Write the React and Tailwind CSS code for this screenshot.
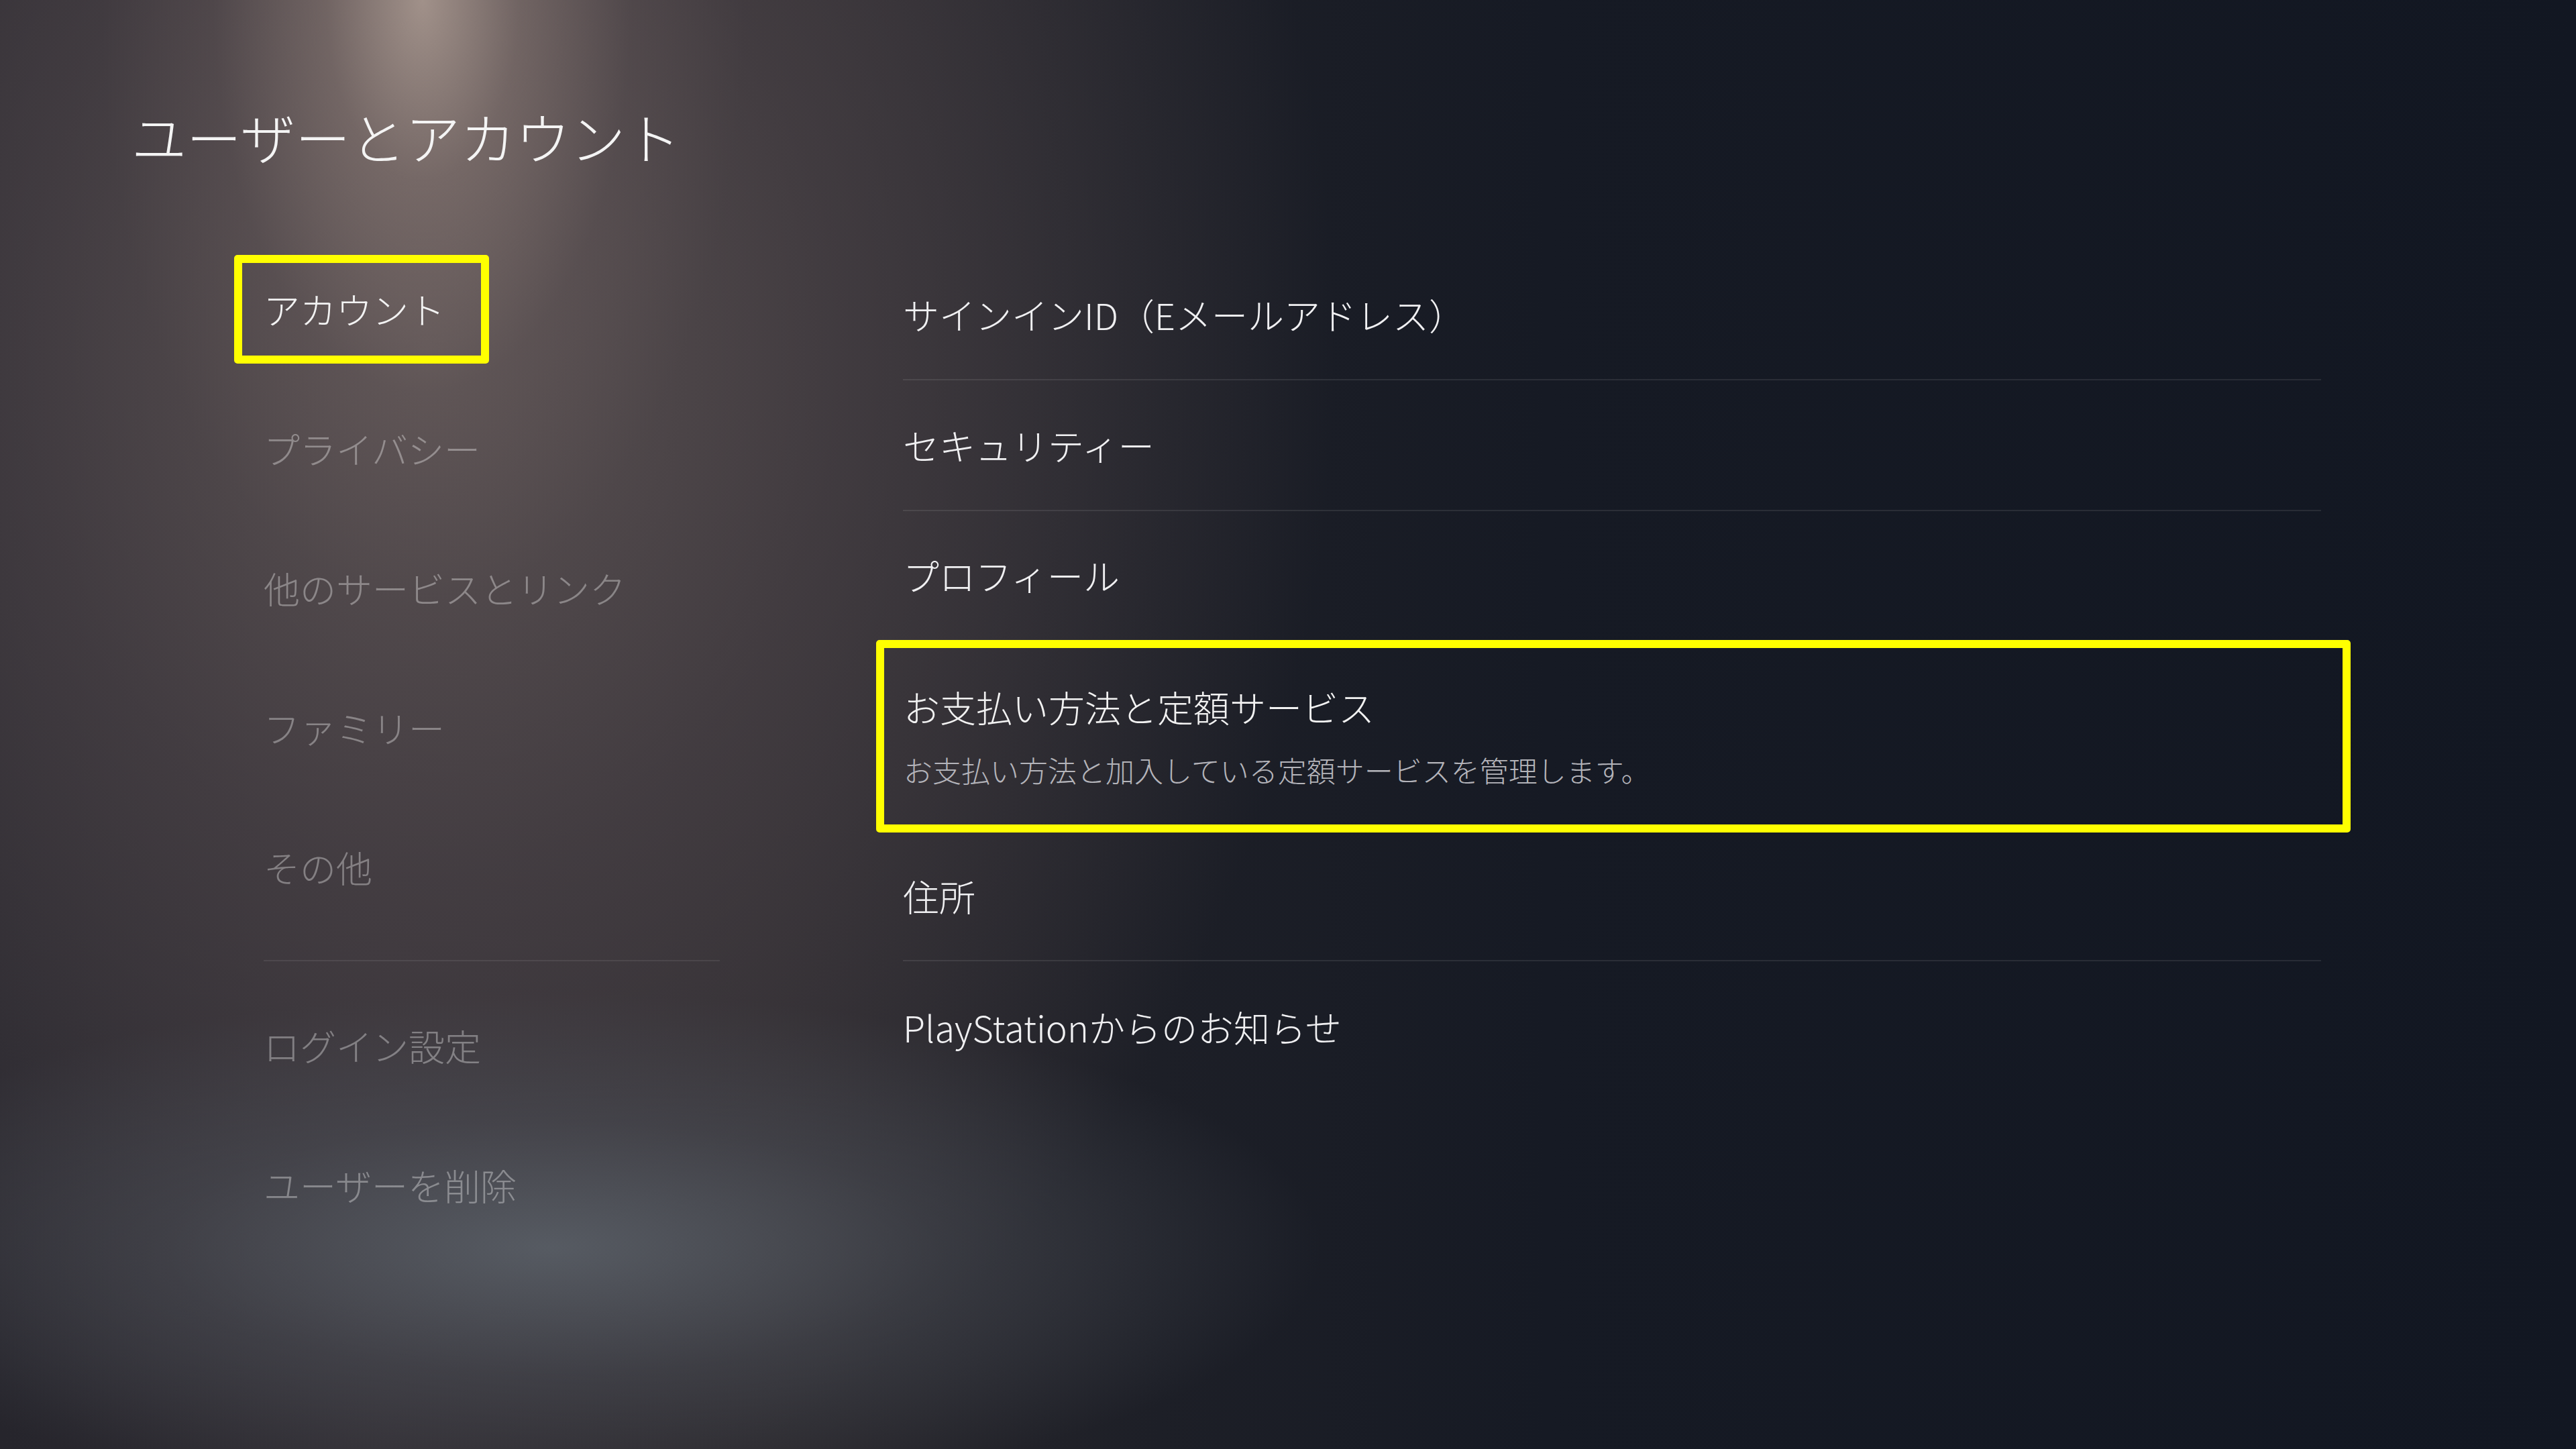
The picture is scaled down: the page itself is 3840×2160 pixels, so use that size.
import React from "react";

const navTop = ["アカウント", "プライバシー", "他のサービスとリンク", "ファミリー", "その他"];
const navBottom = ["ログイン設定", "ユーザーを削除"];

function NavItem({ label, selected }) {
  return (
    <div
      className={
        "h-[162px] w-fit flex items-center pl-[32px] pr-[54px] border-[12px] rounded-[5px] " +
        (selected ? "border-[#ffff00] text-[#f2f2f2]" : "border-transparent text-white/35")
      }
    >
      <span className="text-[54px] leading-[64px] whitespace-nowrap">{label}</span>
    </div>
  );
}

function Row({ label, border, h }) {
  return (
    <div
      className={
        "flex items-center " +
        h +
        (border ? " border-b-2 border-white/[0.09]" : "")
      }
    >
      <span className="text-[54px] leading-[64px] text-[#f0f0f2] whitespace-nowrap">{label}</span>
    </div>
  );
}

export default function App() {
  return (
    <div className="w-[3840px] h-[2160px] overflow-hidden font-['Noto_Sans_CJK_JP','Noto_Sans',sans-serif] font-light bg-[radial-gradient(ellipse_480px_900px_at_630px_0px,rgba(182,164,154,0.8)_0%,rgba(150,132,126,0.5)_30%,rgba(115,100,100,0.2)_65%,transparent_100%),radial-gradient(ellipse_1150px_380px_at_820px_1860px,rgba(92,98,106,0.85)_0%,rgba(80,84,92,0.45)_50%,transparent_100%),radial-gradient(ellipse_1350px_1750px_at_640px_520px,rgba(100,90,90,0.85)_0%,rgba(78,70,74,0.65)_45%,transparent_100%),linear-gradient(90deg,#26252c_0%,#2f2c32_15%,#2a282d_30%,#1d1f27_45%,#161a24_60%,#121722_100%)]">
      <h1 className="pl-[196px] pt-[155px] text-[82px] leading-[96px] text-[#f4f4f4] font-light whitespace-nowrap">
        ユーザーとアカウント
      </h1>
      <div className="mt-[121px] flex items-start">
        {/* left nav */}
        <div className="ml-[349px] w-[723px] mt-[8px] flex flex-col">
          <div className="flex flex-col gap-[46px]">
            {navTop.map((l, i) => (
              <NavItem key={l} label={l} selected={i === 0} />
            ))}
          </div>
          <div className="ml-[44px] mt-[57px] mb-[45px] h-[2px] w-[680px] bg-white/[0.08]" />
          <div className="flex flex-col gap-[46px]">
            {navBottom.map((l) => (
              <NavItem key={l} label={l} />
            ))}
          </div>
        </div>
        {/* right list */}
        <div className="ml-[274px] w-[2114px] flex flex-col">
          <Row label="サインインID（Eメールアドレス）" border h="h-[195px]" />
          <Row label="セキュリティー" border h="h-[195px]" />
          <Row label="プロフィール" h="h-[192px]" />
          <div className="-ml-[40px] -mr-[44px] h-[287px] border-[12px] border-[#ffff00] rounded-[5px] pl-[29px] pt-[56px] flex flex-col">
            <span className="text-[54px] leading-[64px] text-[#f2f2f2] whitespace-nowrap">お支払い方法と定額サービス</span>
            <span className="mt-[35px] text-[43px] leading-[52px] text-[#b4b4ba] whitespace-nowrap">
              お支払い方法と加入している定額サービスを管理します。
            </span>
          </div>
          <Row label="住所" border h="h-[192px]" />
          <Row label="PlayStationからのお知らせ" h="h-[195px]" />
        </div>
      </div>
    </div>
  );
}
